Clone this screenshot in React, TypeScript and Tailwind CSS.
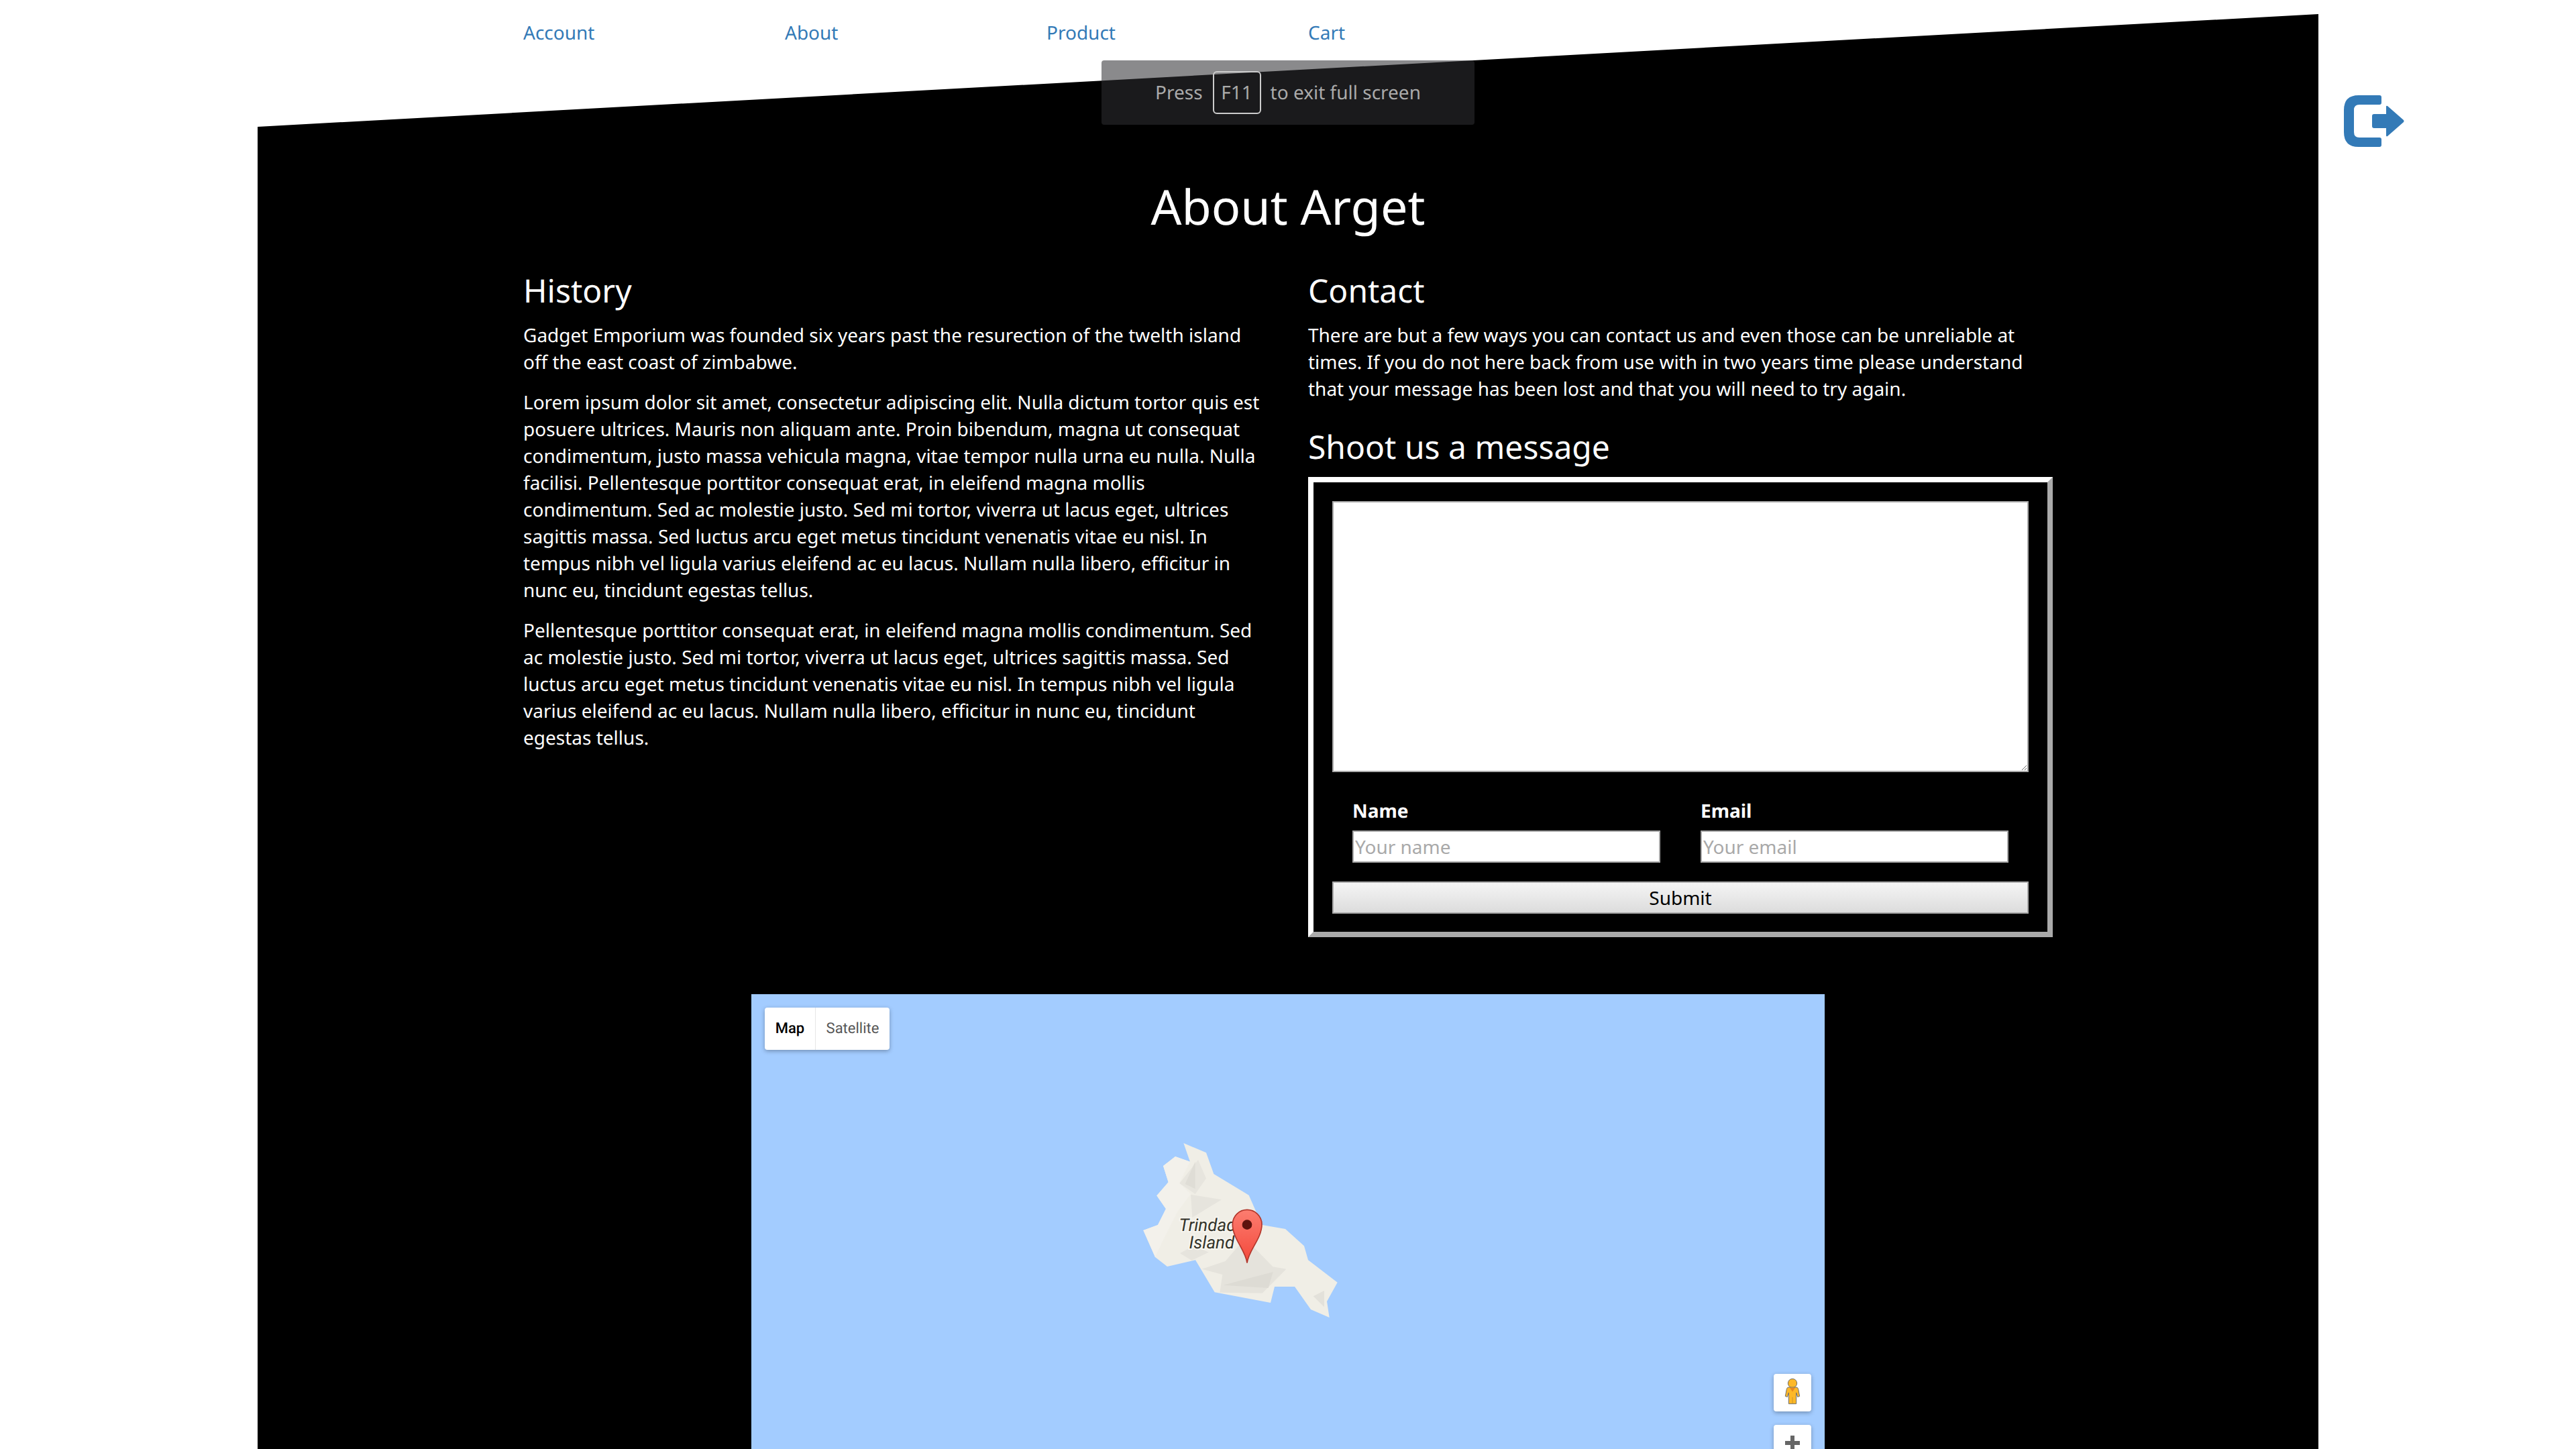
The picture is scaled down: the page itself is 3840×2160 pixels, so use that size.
const navLinks = ["Account", "About", "Product", "Cart"];

const history = [
  "Gadget Emporium was founded six years past the resurection of the twelth island off the east coast of zimbabwe.",
  "Lorem ipsum dolor sit amet, consectetur adipiscing elit. Nulla dictum tortor quis est posuere ultrices. Mauris non aliquam ante. Proin bibendum, magna ut consequat condimentum, justo massa vehicula magna, vitae tempor nulla urna eu nulla. Nulla facilisi. Pellentesque porttitor consequat erat, in eleifend magna mollis condimentum. Sed ac molestie justo. Sed mi tortor, viverra ut lacus eget, ultrices sagittis massa. Sed luctus arcu eget metus tincidunt venenatis vitae eu nisl. In tempus nibh vel ligula varius eleifend ac eu lacus. Nullam nulla libero, efficitur in nunc eu, tincidunt egestas tellus.",
  "Pellentesque porttitor consequat erat, in eleifend magna mollis condimentum. Sed ac molestie justo. Sed mi tortor, viverra ut lacus eget, ultrices sagittis massa. Sed luctus arcu eget metus tincidunt venenatis vitae eu nisl. In tempus nibh vel ligula varius eleifend ac eu lacus. Nullam nulla libero, efficitur in nunc eu, tincidunt egestas tellus.",
];

function LogoutIcon() {
  return (
    <svg width="90" height="77" viewBox="0 0 90 77" fill="#337ab7">
      <path d="M22 0H53Q56 0 56 3V11Q56 14 53 14H23Q15 14 15 22V55Q15 63 23 63H53Q56 63 56 66V74Q56 77 53 77H22Q0 77 0 55V22Q0 0 22 0Z" />
      <path d="M45 28H63V17Q63 15 65 16L89 37Q90 38.500 89 40L65 61Q63 62 63 60V49H45Q42 49 42 46V31Q42 28 45 28Z" />
    </svg>
  );
}

function Island() {
  return (
    <svg
      width="400"
      height="340"
      viewBox="0 0 1200 1020"
      className="absolute left-[540px] top-[178px]"
    >
      <defs>
        <linearGradient id="pin" x1="0" y1="0" x2="0" y2="1">
          <stop offset="0" stopColor="#fc7d70" />
          <stop offset="1" stopColor="#f3483a" />
        </linearGradient>
      </defs>
      <polygon
        fill="#f0eee6"
        points="313,132 414,175 448,270 605,365 640,445 660,497 768,516 852,592 870,655 1001,755 954,840 965,912 882,876 810,774 720,774 702,846 452,799 366,655 240,684 186,642 133,522 198,498 234,426 193,367 245,307 222,234 276,192 342,215"
      />
      <polygon fill="#f3f1eb" points="222,234 276,192 342,215 295,310 345,360 285,440 210,590 186,642 133,522 198,498 234,426 193,367 245,307" />
      <polygon fill="#e7e5de" points="378,207 414,290 365,360 295,312" />
      <polygon fill="#dfddd6" points="365,215 365,337 320,315" />
      <polygon fill="#e6e4dd" points="345,362 483,385 352,465" />
      <polygon fill="#e6e4dd" points="297,625 360,590 425,620 350,657" />
      <polygon fill="#e5e3dc" points="395,695 500,660 560,590 620,590 712,685 772,695 665,803 475,800 487,720" />
      <polygon fill="#dddbd4" points="490,767 713,708 692,780" />
      <polygon fill="#e3e1da" points="893,817 942,792 942,865" />
      <text
        textAnchor="middle"
        fontSize="78"
        fill="#33332a"
        stroke="#f7f5ef"
        strokeWidth="12"
        className="font-['Roboto',sans-serif] italic [paint-order:stroke]"
      >
        <tspan x="440" y="526">Trindade</tspan>
        <tspan x="439" y="604">Island</tspan>
      </text>
      <path
        d="M597 668C590 610 532 560 532 495C532 458 562 430 597 430C632 430 663 458 663 495C663 560 604 610 597 668Z"
        fill="url(#pin)"
        stroke="#b3362b"
        strokeWidth="5"
      />
      <circle cx="597" cy="497" r="22" fill="#5f130e" />
    </svg>
  );
}

function Pegman() {
  return (
    <svg width="56" height="56" viewBox="0 0 168 168">
      <circle cx="84" cy="42" r="20" fill="#fdb827" stroke="#6e6e6e" strokeWidth="3" />
      <path
        d="M66 60H102Q108 60 110 68L116 100L107 103L101 84V134H67V84L61 103L52 100L58 68Q60 60 66 60Z"
        fill="#fdb827"
        stroke="#6e6e6e"
        strokeWidth="3"
      />
      <polygon points="72,62 96,62 84,80" fill="#e8871e" />
      <line x1="84" y1="104" x2="84" y2="133" stroke="#c9962c" strokeWidth="3" />
    </svg>
  );
}

function Map() {
  return (
    <div className="relative mx-auto mt-[85px] h-[900px] w-[1600px] bg-[#a3ccff]">
      <div className="absolute left-5 top-5 flex h-[63px] rounded-[4px] bg-white font-['Roboto',sans-serif] text-[22px] shadow-[0_2px_6px_rgba(0,0,0,0.3)]">
        <div className="flex w-[76px] items-center justify-center border-r border-[#e6e6e6] font-medium text-black">Map</div>
        <div className="flex w-[110px] items-center justify-center text-[#565656]">Satellite</div>
      </div>
      <Island />
      <div className="absolute right-5 top-[566px] flex flex-col gap-5">
        <div className="flex h-14 w-14 rounded-[4px] bg-white shadow-[0_2px_6px_rgba(0,0,0,0.3)]">
          <Pegman />
        </div>
        <div className="flex h-[112px] w-14 justify-center rounded-[4px] bg-white pt-4 shadow-[0_2px_6px_rgba(0,0,0,0.3)]">
          <svg width="22" height="22" viewBox="0 0 22 22" fill="#666666">
            <path d="M8 0H14V8H22V14H14V22H8V14H0V8H8Z" />
          </svg>
        </div>
      </div>
    </div>
  );
}

function MessageForm() {
  return (
    <form className="mt-[18px] flex flex-col border-8 border-t-white border-r-[#aaaaaa] border-b-[#aaaaaa] border-l-white px-7 pt-7 pb-[27px]">
      <textarea className="h-[404px] w-full border-2 border-[#a9a9a9] bg-white" />
      <div className="mt-[38px] grid grid-cols-2 gap-[60px] px-[30px]">
        <label className="flex flex-col gap-[9px] font-bold">
          Name
          <input
            placeholder="Your name"
            className="h-12 w-full border-2 border-[#a9a9a9] bg-white px-[2px] text-black placeholder:text-[#a9a9a9] font-normal"
          />
        </label>
        <label className="flex flex-col gap-[9px] font-bold">
          Email
          <input
            placeholder="Your email"
            className="h-12 w-full border-2 border-[#a9a9a9] bg-white px-[2px] text-black placeholder:text-[#a9a9a9] font-normal"
          />
        </label>
      </div>
      <button
        type="button"
        className="mt-7 h-12 w-full border-2 border-[#a9a9a9] bg-gradient-to-b from-[#f5f5f5] to-[#dcdcdc] text-black"
      >
        Submit
      </button>
    </form>
  );
}

export default function App() {
  return (
    <div className="relative flex h-screen overflow-hidden bg-white font-['Noto_Sans',sans-serif] text-[28px] leading-[40px] [text-rendering:geometricPrecision]">
      <div className="w-[384px] shrink-0" />
      <main className="relative w-[3072px] shrink-0">
        <div className="absolute inset-0 bg-black [clip-path:polygon(0_189px,100%_21px,100%_100%,0_100%)]" />
        <div className="relative mx-auto w-[2340px] px-[30px] pt-[29px]">
          <nav className="flex text-[#337ab7]">
            {navLinks.map((link) => (
              <a key={link} href="#" className="w-[390px]">
                {link}
              </a>
            ))}
          </nav>
          <h1 className="mt-[200px] text-center text-[72px] leading-[79px] text-white">About Arget</h1>
          <div className="mt-[59px] grid grid-cols-2 gap-[60px] text-white">
            <section>
              <h3 className="mb-5 text-[48px] leading-[53px]">History</h3>
              {history.map((text) => (
                <p key={text.slice(0, 12)} className="mb-5">
                  {text}
                </p>
              ))}
            </section>
            <section>
              <h3 className="mb-5 text-[48px] leading-[53px]">Contact</h3>
              <p>
                There are but a few ways you can contact us and even those can be unreliable at times. If you do not here back from use with in two years time please understand that your message has been lost and that you will need to try again.
              </p>
              <h3 className="mt-10 text-[48px] leading-[53px]">Shoot us a message</h3>
              <MessageForm />
            </section>
          </div>
        </div>
        <div className="relative">
          <Map />
        </div>
      </main>
      <aside className="flex-1 pl-[38px] pt-[142px]">
        <LogoutIcon />
      </aside>
      <div className="absolute left-1/2 top-[90px] flex h-24 w-[556px] -translate-x-1/2 items-center justify-center rounded-[4px] bg-[rgba(46,47,50,0.56)] text-[#aaaaaa]">
        <span>Press</span>
        <span className="ml-[15px] mr-[14px] flex h-16 w-[72px] items-center justify-center rounded-[6px] border-2 border-[#cccccc]">F11</span>
        <span>to exit full screen</span>
      </div>
    </div>
  );
}
